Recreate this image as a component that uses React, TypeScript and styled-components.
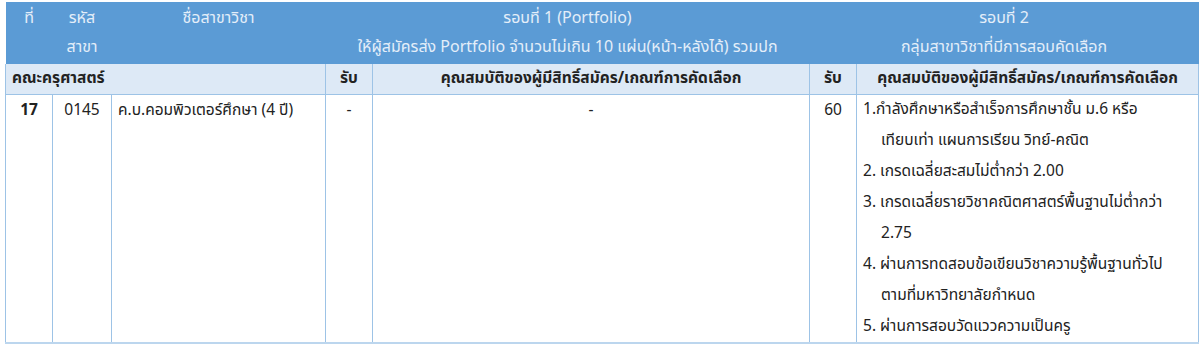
import React from "react";
import styled, { createGlobalStyle } from "styled-components";

const GlobalStyle = createGlobalStyle`
  html, body { margin: 0; padding: 0; background: #ffffff; }
  body { font-family: "Noto Sans Thai", "Noto Sans", "DejaVu Sans", sans-serif; }
`;

const Page = styled.div`
  padding: 2px 6px 0 5px;
`;

const Table = styled.table`
  width: 1193px;
  border-collapse: collapse;
  table-layout: fixed;
  font-size: 15.5px;
  color: #222;
`;

const HeadCell = styled.th<{ $align?: string }>`
  background: #5b9bd5;
  color: #e4eef9;
  font-weight: 400;
  font-size: 16px;
  line-height: 29px;
  padding: 2px 0;
  vertical-align: top;
  text-align: ${(p) => p.$align || "center"};
  border: 0;
  white-space: nowrap;
`;

const SubCell = styled.td<{ $align?: string }>`
  background: #dde9f6;
  font-weight: 700;
  height: 30px;
  line-height: 30px;
  padding: 0 6px;
  text-align: ${(p) => p.$align || "center"};
  border: 1px solid #9dc3e6;
  border-top: 0;
  white-space: nowrap;
`;

const BodyCell = styled.td<{ $align?: string; $bold?: boolean }>`
  line-height: 31px;
  padding: 0 6px;
  vertical-align: top;
  text-align: ${(p) => p.$align || "center"};
  font-weight: ${(p) => (p.$bold ? 700 : 400)};
  border: 1px solid #9dc3e6;
  border-bottom: 2px solid #bcd6ee;
`;

const List = styled.div`
  text-align: left;
  white-space: nowrap;
  margin-top: -1px;
`;

const Item = styled.div`
  padding-left: 18px;
  text-indent: -18px;
`;

const criteria: string[][] = [
  ["1.กำลังศึกษาหรือสำเร็จการศึกษาชั้น ม.6 หรือ", "เทียบเท่า แผนการเรียน วิทย์-คณิต"],
  ["2. เกรดเฉลี่ยสะสมไม่ต่ำกว่า 2.00"],
  ["3. เกรดเฉลี่ยรายวิชาคณิตศาสตร์พื้นฐานไม่ต่ำกว่า", "2.75"],
  ["4. ผ่านการทดสอบข้อเขียนวิชาความรู้พื้นฐานทั่วไป", "ตามที่มหาวิทยาลัยกำหนด"],
  ["5. ผ่านการสอบวัดแววความเป็นครู"],
];

export default function App() {
  return (
    <Page>
      <GlobalStyle />
      <Table>
        <colgroup>
          <col style={{ width: 47 }} />
          <col style={{ width: 59 }} />
          <col style={{ width: 214 }} />
          <col style={{ width: 47 }} />
          <col style={{ width: 437 }} />
          <col style={{ width: 47 }} />
          <col style={{ width: 342 }} />
        </colgroup>
        <thead>
          <tr>
            <HeadCell>ที่</HeadCell>
            <HeadCell>
              รหัส
              <br />
              สาขา
            </HeadCell>
            <HeadCell>ชื่อสาขาวิชา</HeadCell>
            <HeadCell colSpan={2}>
              รอบที่ 1 (Portfolio)
              <br />
              ให้ผู้สมัครส่ง Portfolio จำนวนไม่เกิน 10 แผ่น(หน้า-หลังได้) รวมปก
            </HeadCell>
            <HeadCell colSpan={2}>
              รอบที่ 2
              <br />
              กลุ่มสาขาวิชาที่มีการสอบคัดเลือก
            </HeadCell>
          </tr>
        </thead>
        <tbody>
          <tr>
            <SubCell colSpan={3} $align="left">
              คณะครุศาสตร์
            </SubCell>
            <SubCell>รับ</SubCell>
            <SubCell>คุณสมบัติของผู้มีสิทธิ์สมัคร/เกณฑ์การคัดเลือก</SubCell>
            <SubCell>รับ</SubCell>
            <SubCell>คุณสมบัติของผู้มีสิทธิ์สมัคร/เกณฑ์การคัดเลือก</SubCell>
          </tr>
          <tr>
            <BodyCell $bold>17</BodyCell>
            <BodyCell>0145</BodyCell>
            <BodyCell $align="left">ค.บ.คอมพิวเตอร์ศึกษา (4 ปี)</BodyCell>
            <BodyCell>-</BodyCell>
            <BodyCell>-</BodyCell>
            <BodyCell>60</BodyCell>
            <BodyCell $align="left">
              <List>
                {criteria.map((lines) => (
                  <Item key={lines[0]}>
                    {lines.map((l, i) => (
                      <React.Fragment key={l}>
                        {i > 0 && <br />}
                        {l}
                      </React.Fragment>
                    ))}
                  </Item>
                ))}
              </List>
            </BodyCell>
          </tr>
        </tbody>
      </Table>
    </Page>
  );
}
